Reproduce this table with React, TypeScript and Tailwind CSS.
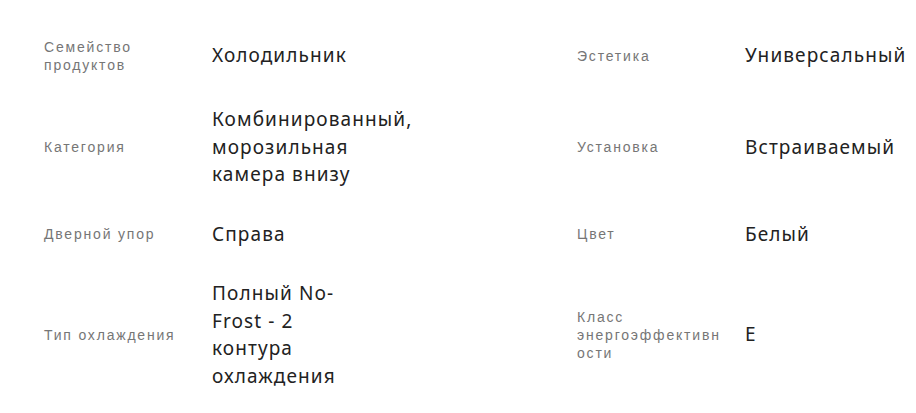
import React from "react";

const rows: [string, string, string, string][] = [
  ["Семейство продуктов", "Холодильник", "Эстетика", "Универсальный"],
  ["Категория", "Комбинированный, морозильная камера внизу", "Установка", "Встраиваемый"],
  ["Дверной упор", "Справа", "Цвет", "Белый"],
  ["Тип охлаждения", "Полный No-Frost - 2 контура охлаждения", "Класс энергоэффективности", "E"],
];

function Label({ text }: { text: string }) {
  return (
    <div className="w-[146px] [overflow-wrap:anywhere] text-[14px] leading-[18px] tracking-[1.8px] text-[#767676] [font-family:'Liberation_Sans',Arial,sans-serif]">
      {text}
    </div>
  );
}

function Value({ text }: { text: string }) {
  return (
    <div className="w-[164px] text-[19px] leading-[27.5px] tracking-[1.1px] text-[#222222] [font-family:'Noto_Sans',sans-serif]">
      {text}
    </div>
  );
}

export default function App() {
  return (
    <div className="w-[916px] h-[413px] overflow-hidden bg-white">
      <div className="grid w-[1200px] grid-cols-[168px_365px_168px_365px] items-center gap-y-8 pl-[44px] pt-[38px]">
        {rows.map((r, i) => (
          <React.Fragment key={i}>
            <Label text={r[0]} />
            <Value text={r[1]} />
            <Label text={r[2]} />
            <Value text={r[3]} />
          </React.Fragment>
        ))}
      </div>
    </div>
  );
}
